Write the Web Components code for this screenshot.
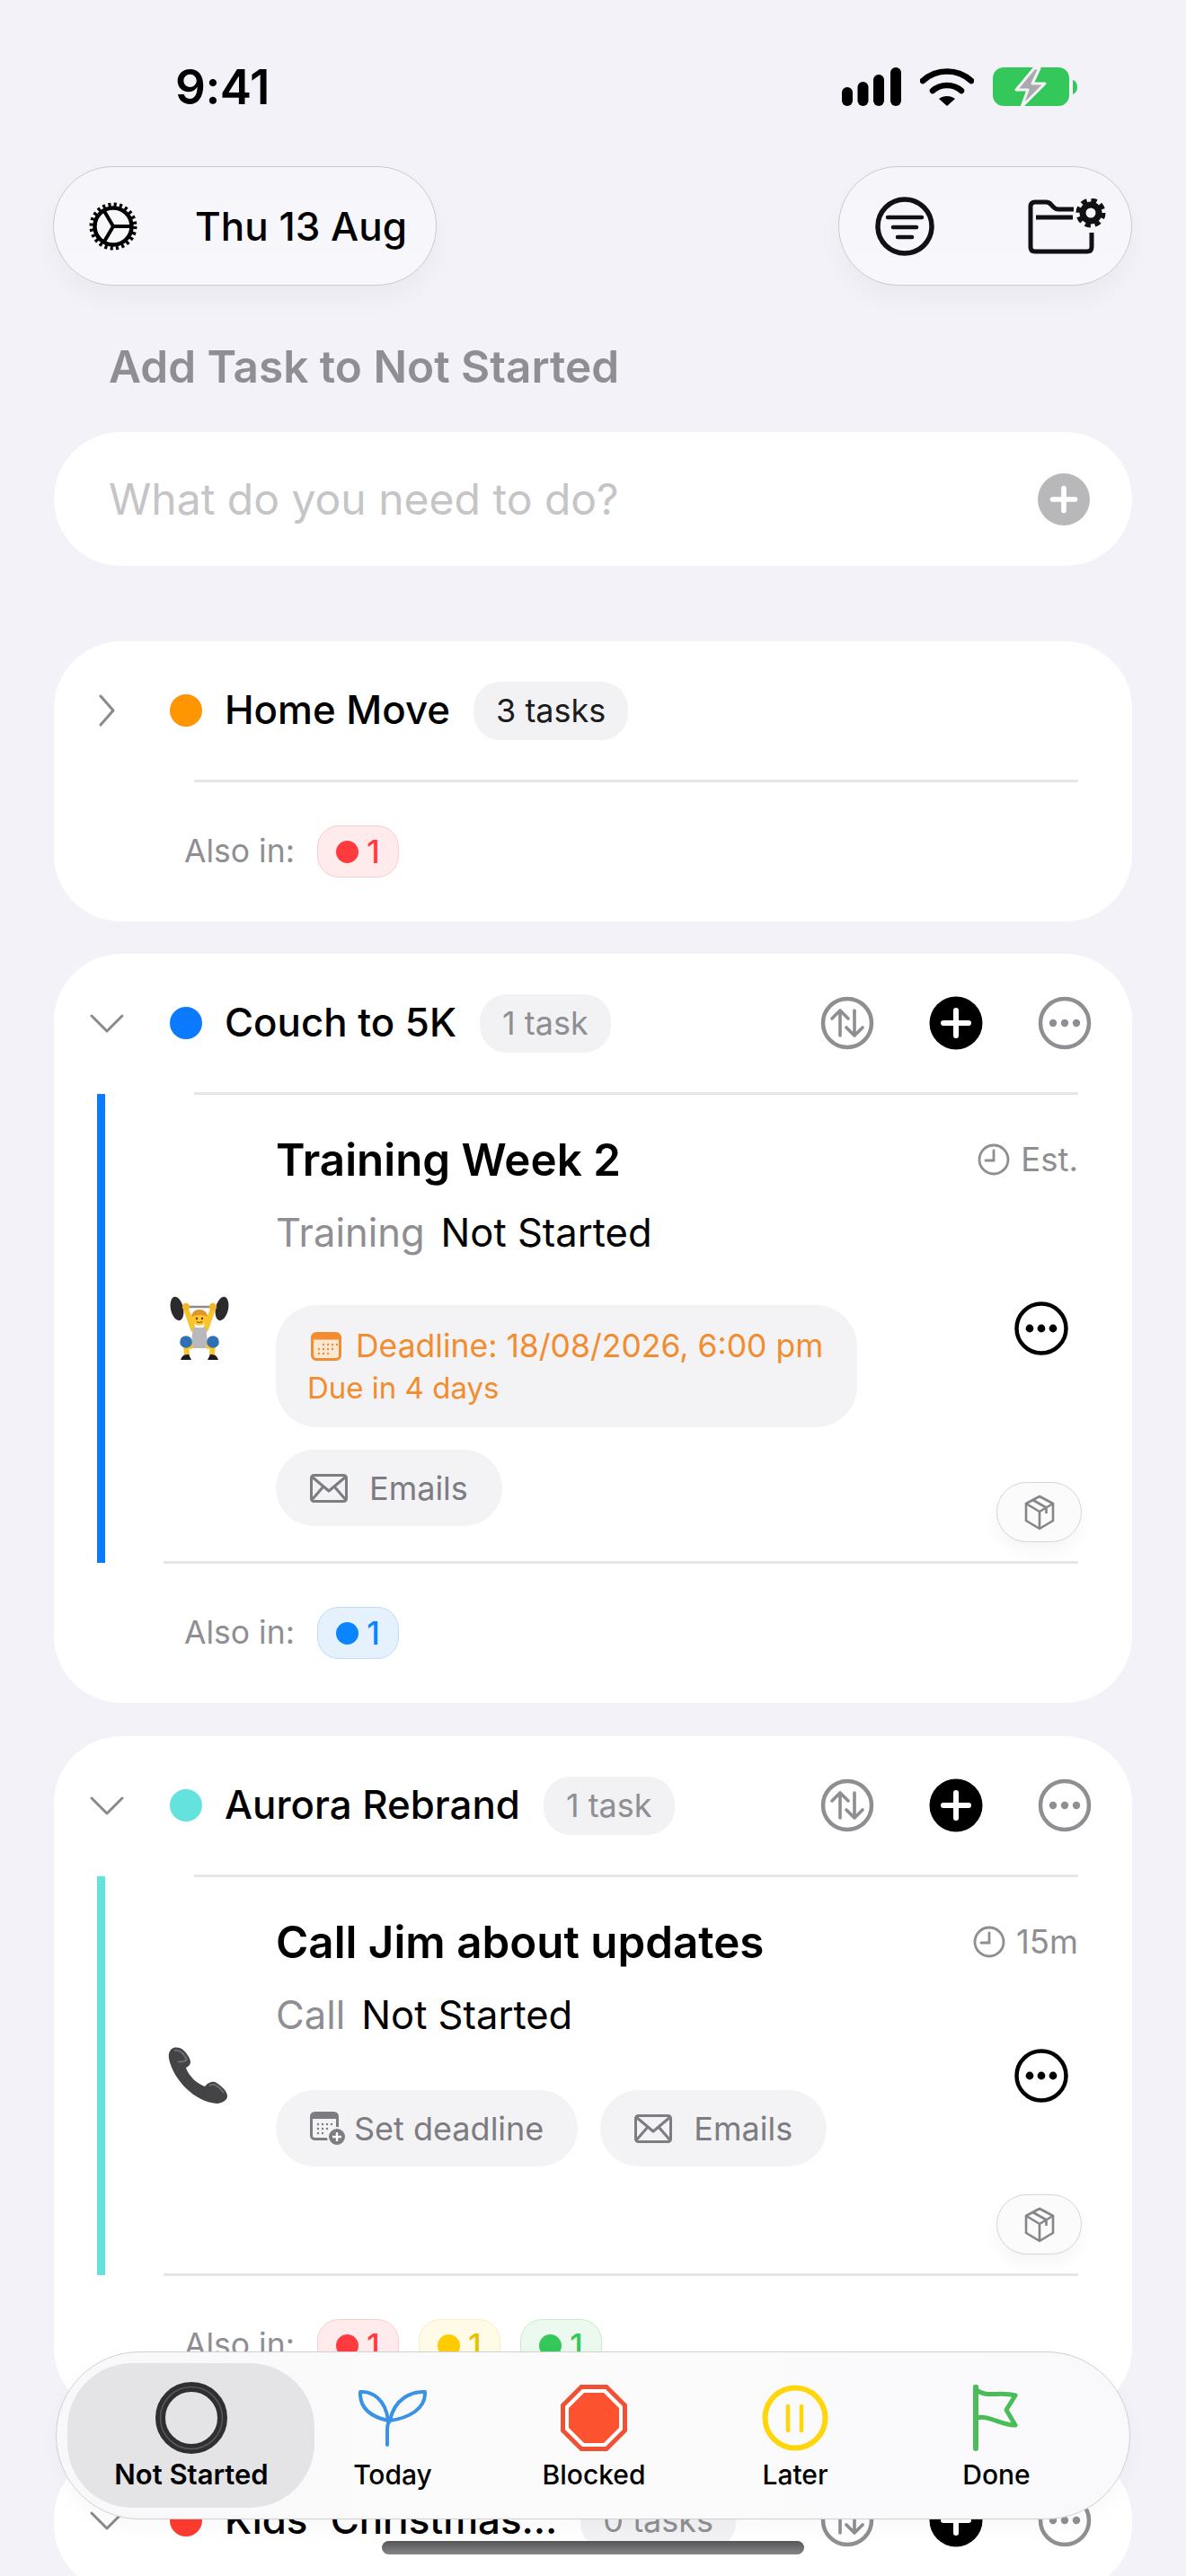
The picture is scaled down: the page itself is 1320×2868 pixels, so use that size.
<!DOCTYPE html>
<html>
<head>
<meta charset="utf-8">
<title>Tasks</title>
<style>
  html, body { margin: 0; height: 2868px; overflow: hidden; }
  body {
    position: relative;
    background: #f2f2f8;
    font-family: Inter, "Noto Sans", "Liberation Sans", sans-serif;
    color: #000;
  }
  main { display: block; padding: 0 60px; }
</style>
</head>
<body>
<main>
  <status-bar></status-bar>
  <top-bar></top-bar>
  <add-task></add-task>

  <project-card color="#ff9500" name="Home Move" count="3 tasks" dark-count collapsed style="margin-bottom:36px">
    <also-in slot="also"><status-chip color="#ff3b40" bg="#ffebec" line="#fbcdcf">1</status-chip></also-in>
  </project-card>

  <project-card color="#0a7aff" name="Couch to 5K" count="1 task" actions>
    <task-row color="#0a7aff" name="Training Week 2" kind="Training" est="Est." emoji="lifter" style="--pad-end:41px">
      <deadline-chip></deadline-chip>
      <task-chip icon="mail">Emails</task-chip>
    </task-row>
    <also-in slot="also"><status-chip color="#0a84ff" bg="#e5f2fe" line="#bcdcf8">1</status-chip></also-in>
  </project-card>

  <project-card color="#64e3de" name="Aurora Rebrand" count="1 task" actions style="margin-bottom:40px">
    <task-row color="#64e3de" name="Call Jim about updates" kind="Call" est="15m" emoji="phone" style="--pad-end:121px;--chips-gap:56px">
      <task-chip icon="calendar-plus">Set deadline</task-chip>
      <task-chip icon="mail">Emails</task-chip>
    </task-row>
    <also-in slot="also">
      <status-chip color="#ff3b40" bg="#ffebec" line="#fbcdcf">1</status-chip>
      <status-chip color="#ffcc00" bg="#fffbe6" line="#f8efc6">1</status-chip>
      <status-chip color="#34c759" bg="#ebf9ee" line="#c9ecd0">1</status-chip>
    </also-in>
  </project-card>

  <project-card color="#ff3b30" name="Kids' Christmas..." count="0 tasks" actions></project-card>
</main>

<tab-bar></tab-bar>
<home-indicator></home-indicator>

<script>
const icons = {
  gear: `<svg width="60" height="60" viewBox="0 0 60 60" fill="none" stroke="#000">
    <circle cx="30" cy="30" r="24" stroke-width="5" stroke-dasharray="3.1 3.18"/>
    <circle cx="30" cy="30" r="20.5" stroke-width="4.5"/>
    <path d="M30 30H50M30 30L20 13M30 30L20 47" stroke-width="4"/>
  </svg>`,
  filter: `<svg width="66" height="66" viewBox="0 0 66 66" fill="none" stroke="#111114" stroke-linecap="round">
    <circle cx="33" cy="33" r="30" stroke-width="5.5"/>
    <path d="M14 23H52M20 34H46M25 45H41" stroke-width="4.5"/>
  </svg>`,
  folderGear: `<svg width="90" height="62" viewBox="0 0 90 62" fill="none" stroke="#111114">
    <path d="M71 38V54Q71 59 66 59H8Q3 59 3 54V9Q3 4 8 4H20Q24 4 26 7L29 10Q31 12 34 12H51" stroke-width="5"/>
    <path d="M9 21H50" stroke-width="5"/>
    <circle cx="70" cy="16" r="9" stroke-width="7"/>
    <circle cx="70" cy="16" r="13.5" stroke-width="6" stroke-dasharray="6 4.6"/>
  </svg>`,
  plus: `<svg width="34" height="34" viewBox="0 0 30 30" stroke="#fff" stroke-width="5" stroke-linecap="round"><path d="M15 4V26M4 15H26"/></svg>`,
  sort: `<svg width="60" height="60" viewBox="0 0 60 60" fill="none" stroke="#8e8e93" stroke-width="4.5" stroke-linecap="round" stroke-linejoin="round">
    <circle cx="30" cy="30" r="27"/>
    <path d="M22 44V16M13 25L22 16L31 25" stroke-width="3.6"/>
    <path d="M38 16V44M29 35L38 44L47 35" stroke-width="3.6"/>
  </svg>`,
  addBlack: `<svg width="60" height="60" viewBox="0 0 60 60"><circle cx="30" cy="30" r="29.500" fill="#000"/><path d="M30 16V44M16 30H44" stroke="#fff" stroke-width="6" stroke-linecap="round"/></svg>`,
  moreGray: `<svg width="60" height="60" viewBox="0 0 60 60" fill="none"><circle cx="30" cy="30" r="27" stroke="#8e8e93" stroke-width="4.5"/><g fill="#8e8e93"><circle cx="17" cy="30" r="4.2"/><circle cx="30" cy="30" r="4.2"/><circle cx="43" cy="30" r="4.2"/></g></svg>`,
  moreBlack: `<svg width="60" height="60" viewBox="0 0 60 60" fill="none"><circle cx="30" cy="30" r="27.5" stroke="#000" stroke-width="4.5"/><g fill="#000"><circle cx="17" cy="30" r="4.4"/><circle cx="30" cy="30" r="4.4"/><circle cx="43" cy="30" r="4.4"/></g></svg>`,
  clock: `<svg width="36" height="36" viewBox="0 0 36 36" fill="none" stroke="#8e8e93" stroke-width="2.8" stroke-linecap="round"><circle cx="18" cy="18" r="16"/><path d="M18 8V19H9"/></svg>`,
  mail: `<svg width="42" height="32" viewBox="0 0 42 32" fill="none" stroke="#7c7c82" stroke-width="3" stroke-linejoin="round"><rect x="1.5" y="1.5" width="39" height="29" rx="3"/><path d="M2 3L21 19L40 3M2 29L15 14M40 29L27 14"/></svg>`,
  calendar: `<svg width="34" height="32" viewBox="0 0 34 32" fill="none"><rect x="1.5" y="1.5" width="31" height="29" rx="4.5" fill="#fbe8d4" stroke="#f28c2f" stroke-width="3"/><path d="M4 1.5H30Q32.500 1.500 32.500 4V8.500H1.500V4Q1.500 1.500 4 1.500Z" fill="#f28c2f"/><g fill="#f28c2f"><circle cx="14" cy="14" r="1.200"/><circle cx="19" cy="14" r="1.200"/><circle cx="24" cy="14" r="1.200"/><circle cx="29" cy="14" r="1.200"/><circle cx="9" cy="19" r="1.200"/><circle cx="14" cy="19" r="1.200"/><circle cx="19" cy="19" r="1.200"/><circle cx="24" cy="19" r="1.200"/><circle cx="9" cy="24" r="1.200"/><circle cx="14" cy="24" r="1.200"/><circle cx="19" cy="24" r="1.200"/></g></svg>`,
  calendarPlus: `<svg width="40" height="38" viewBox="0 0 40 38" fill="none"><rect x="1.500" y="1.500" width="29" height="29" rx="4" stroke="#7c7c82" stroke-width="3"/><path d="M4 1.500H28Q30.500 1.500 30.500 4V8H1.500V4Q1.500 1.500 4 1.500Z" fill="#7c7c82"/><g fill="#7c7c82"><circle cx="9" cy="14" r="1.200"/><circle cx="14" cy="14" r="1.200"/><circle cx="19" cy="14" r="1.200"/><circle cx="24" cy="14" r="1.200"/><circle cx="9" cy="19" r="1.200"/><circle cx="14" cy="19" r="1.200"/><circle cx="19" cy="19" r="1.200"/><circle cx="9" cy="24" r="1.200"/><circle cx="14" cy="24" r="1.200"/></g><circle cx="30" cy="28" r="10" fill="#7c7c82" stroke="#f3f3f5" stroke-width="2"/><path d="M30 23V33M25 28H35" stroke="#fff" stroke-width="2.400"/></svg>`,
  box: `<svg width="34" height="40" viewBox="0 0 34 40" fill="none" stroke="#85858a" stroke-width="2.600" stroke-linejoin="round"><path d="M17 2L32 10V29L17 38L2 29V10Z"/><path d="M2 10L17 19L32 10M17 19V38M9.500 6L24.500 14.500V21"/></svg>`,
  lifter: `<svg width="70" height="72" viewBox="0 0 70 72" fill="none">
    <path d="M10 12H60" stroke="#8a8a8c" stroke-width="2.500"/>
    <ellipse cx="10" cy="14" rx="7" ry="13.500" transform="rotate(-12 10 14)" fill="#2b2b2e"/>
    <ellipse cx="60" cy="14" rx="7" ry="13.500" transform="rotate(12 60 14)" fill="#2b2b2e"/>
    <path d="M20 14L28 37M50 14L42 37" stroke="#f8c42c" stroke-width="6" stroke-linecap="round"/>
    <circle cx="20" cy="12" r="4.200" fill="#f2b52a"/><circle cx="50" cy="12" r="4.200" fill="#f2b52a"/>
    <path d="M28 35H42L44 50L46 58H24L26 50Z" fill="#b9b9bd"/>
    <path d="M25 56L20 52L21 65M45 56L50 52L49 65" stroke="#f8c42c" stroke-width="6" stroke-linecap="round" stroke-linejoin="round"/>
    <circle cx="20" cy="51" r="6.800" fill="#2f6fb3"/><circle cx="50" cy="51" r="6.800" fill="#2f6fb3"/>
    <path d="M14 71Q16 64 23 65L26 71ZM56 71Q54 64 47 65L44 71Z" fill="#1c1c1e"/>
    <circle cx="35" cy="24" r="8.800" fill="#fcc52e"/>
    <path d="M26 23Q27 15 35 15Q43 15 44 23Q38 19 26 23Z" fill="#e0962a"/>
    <circle cx="32" cy="25" r="1.200" fill="#5a3a10"/><circle cx="38" cy="25" r="1.200" fill="#5a3a10"/>
    <path d="M32 28.500Q35 30.500 38 28.500" stroke="#8a4b18" stroke-width="1.100"/>
  </svg>`,
  phone: `<svg width="68" height="66" viewBox="0 0 68 66"><path d="M6 2C14 0 20 6 24 14C26 18 25 22 20 24C22 32 32 42 41 45C44 41 50 38 54 41C60 45 66 50 66 56C66 60 60 64 54 64C30 62 6 38 1 14C0 8 2 4 6 2Z" fill="#444447"/><path d="M7 5C13 4 18 9 21 15C18 18 13 18 11 17M46 44C50 41 56 44 62 52" fill="none" stroke="#6f6f73" stroke-width="2"/></svg>`,
  ring: `<svg width="80" height="80" viewBox="0 0 80 80" fill="none"><circle cx="40" cy="40" r="34.500" stroke="#2f2f31" stroke-width="11"/><circle cx="40" cy="40" r="34.500" stroke="#58585a" stroke-width="1.500"/></svg>`,
  sprout: `<svg width="76" height="64" viewBox="0 0 76 64" fill="none" stroke="#3a92e4" stroke-width="4" stroke-linecap="round" stroke-linejoin="round"><path d="M2 3C14 2 30 10 33 35C15 31 1 22 2 3Z"/><path d="M74 3C60 2 40 10 35 35C56 32 75 22 74 3Z"/><path d="M32 62V45C32 40 33 37 35 35"/></svg>`,
  stop: `<svg width="74" height="74" viewBox="0 0 74 74"><polygon points="22,0 52,0 74,22 74,52 52,74 22,74 0,52 0,22" fill="#ee5136"/><polygon points="24,5 50,5 69,24 69,50 50,69 24,69 5,50 5,24" fill="#fff"/><polygon points="26,9 48,9 65,26 65,48 48,65 26,65 9,48 9,26" fill="#fd5230"/></svg>`,
  pause: `<svg width="74" height="74" viewBox="0 0 74 74" fill="none" stroke="#ffd60a"><circle cx="37" cy="37" r="33.500" stroke-width="6"/><path d="M29 24V51M44 24V51" stroke-width="4.500" stroke-linecap="round"/></svg>`,
  flag: `<svg width="54" height="74" viewBox="0 0 54 74" fill="none" stroke="#4cbb5a" stroke-linecap="round" stroke-linejoin="round"><path d="M4 2.500V71" stroke-width="6"/><path d="M5 6C16 15 30 7 48 12L38 28L48 45C33 46 18 33 5 37" stroke-width="5"/></svg>`
};

class StatusBar extends HTMLElement {
  connectedCallback() {
    this.attachShadow({ mode: 'open' });
    this.shadowRoot.innerHTML = `
      <style>
        :host { display: flex; align-items: center; justify-content: space-between; height: 176px; padding: 9px 61px 0 135px; }
        .time { font: 600 53px/60px Inter, sans-serif; letter-spacing: -0.5px; }
        .icons { display: flex; align-items: center; gap: 21px; }
      </style>
      <span class="time">9:41</span>
      <span class="icons">
        <svg width="66" height="44" viewBox="0 0 66 44" fill="#000"><rect x="0" y="22" width="12" height="21" rx="6"/><rect x="17.500" y="16" width="12" height="27" rx="6"/><rect x="35" y="8" width="12" height="35" rx="6"/><rect x="54" y="0" width="12" height="43" rx="6"/></svg>
        <svg width="60" height="44" viewBox="0 0 60 44" fill="none" stroke="#000" stroke-width="6.500" stroke-linecap="round"><path d="M3 15C18 1 42 1 57 15"/><path d="M14 26C23 18 37 18 46 26"/><path d="M30 43L21 35C26 31 34 31 39 35Z" fill="#000" stroke="none"/></svg>
        <svg width="94" height="46" viewBox="0 0 94 46"><rect x="0" y="1" width="85" height="43" rx="12" fill="#34c759"/><path d="M89 15Q94 17 94 23Q94 29 89 31Z" fill="#34c759"/><path d="M46 2L26 26H39L32 45L58 19H44L52 2Z" fill="#a9a9ae" stroke="#f2f2f8" stroke-width="3" stroke-linejoin="round"/></svg>
      </span>`;
  }
}

class TopBar extends HTMLElement {
  connectedCallback() {
    this.attachShadow({ mode: 'open' });
    this.shadowRoot.innerHTML = `
      <style>
        :host { display: flex; justify-content: space-between; margin-left: -1px; }
        .pill {
          display: flex; align-items: center; height: 133px; box-sizing: border-box;
          border-radius: 67px; border: 1.5px solid #c9c9ce;
          background: linear-gradient(#f5f5fa, #f8f8fc);
          box-shadow: 0 16px 30px rgba(0, 0, 0, 0.035);
        }
        .date { width: 427px; padding-left: 36px; gap: 61px; }
        .date span { font: 500 44px/50px Inter, sans-serif; white-space: nowrap; }
        .tools { width: 327px; padding-left: 40px; gap: 104px; }
      </style>
      <div class="pill date">${icons.gear}<span>Thu 13 Aug</span></div>
      <div class="pill tools">${icons.filter}${icons.folderGear}</div>`;
  }
}

class AddTask extends HTMLElement {
  connectedCallback() {
    this.attachShadow({ mode: 'open' });
    this.shadowRoot.innerHTML = `
      <style>
        :host { display: block; margin-bottom: 84px; }
        h2 { margin: 60px 0 43px 61px; font: 600 49.500px/60px Inter, sans-serif; color: #8e8e93; }
        .field {
          display: flex; align-items: center; justify-content: space-between;
          height: 149px; box-sizing: border-box; padding: 0 47px 0 61px;
          border-radius: 75px; background: #fff;
        }
        .field span { font: 400 48px/56px Inter, sans-serif; color: #c5c5c8; }
        .add { display: grid; place-items: center; width: 58px; height: 58px; border-radius: 50%; background: #b8b8ba; }
      </style>
      <h2>Add Task to Not Started</h2>
      <div class="field"><span>What do you need to do?</span><div class="add">${icons.plus}</div></div>`;
  }
}

class ProjectCard extends HTMLElement {
  connectedCallback() {
    const closed = this.hasAttribute('collapsed');
    const chevron = closed
      ? `<svg width="20" height="36" viewBox="0 0 20 36" fill="none" stroke="#8a8a8e" stroke-width="3" stroke-linecap="round" stroke-linejoin="round"><path d="M3 2L17 18L3 34"/></svg>`
      : `<svg width="38" height="22" viewBox="0 0 38 22" fill="none" stroke="#8a8a8e" stroke-width="3" stroke-linecap="round" stroke-linejoin="round"><path d="M2 3L19 20L36 3"/></svg>`;
    const actions = this.hasAttribute('actions')
      ? `<div class="actions">${icons.sort}${icons.addBlack}${icons.moreGray}</div>` : '';
    const hasAlso = this.querySelector('[slot="also"]');
    const hasTask = this.querySelector('task-row');
    this.attachShadow({ mode: 'open' });
    this.shadowRoot.innerHTML = `
      <style>
        :host { display: block; margin-bottom: 37px; background: #fff; border-radius: 75px; }
        header { display: flex; align-items: center; height: 154px; padding-right: 45px; }
        .chev { display: flex; justify-content: center; width: 118px; margin-right: 11px; }
        .dot { width: 36px; height: 36px; border-radius: 50%; flex: none; }
        .name { margin: 0 26px 0 25px; font: 500 43.800px/56px Inter, sans-serif; white-space: nowrap; }
        .count { padding: 0 25px; border-radius: 30px; background: #f2f2f4; font: 400 36px/65px Inter, sans-serif; color: #8e8e93; white-space: nowrap; }
        .count.dark { color: #1c1c1e; }
        .actions { display: flex; gap: 61px; margin-left: auto; }
        .rule { height: 3px; margin: 0 60px 0 156px; background: #e6e6e8; }
        .rule.end { margin: -2px 60px 0 122px; position: relative; }
        .foot { padding: 48px 0 49px 145px; }
      </style>
      <header>
        <span class="chev">${chevron}</span>
        <span class="dot" style="background:${this.getAttribute('color')}"></span>
        <span class="name">${this.getAttribute('name')}</span>
        <span class="count ${this.hasAttribute('dark-count') ? 'dark' : ''}">${this.getAttribute('count')}</span>
        ${actions}
      </header>
      <div class="rule"></div>
      <slot></slot>
      ${hasTask ? '<div class="rule end"></div>' : ''}
      ${hasAlso ? '<div class="foot"><slot name="also"></slot></div>' : ''}`;
  }
}

class TaskRow extends HTMLElement {
  connectedCallback() {
    this.attachShadow({ mode: 'open' });
    this.shadowRoot.innerHTML = `
      <style>
        :host { display: grid; grid-template-columns: 9px 190px 1fr; margin: -1px 60px 0 48px; }
        .bar { grid-area: 1 / 1; background: var(--bar); }
        .emoji { grid-area: 1 / 2; align-self: center; padding-left: 70px; display: flex; }
        .body { grid-area: 1 / 3; padding: 42px 0 var(--pad-end, 40px); }
        .top { display: flex; align-items: center; justify-content: space-between; height: 62px; }
        h3 { margin: 0; font: 600 49.300px/62px Inter, sans-serif; white-space: nowrap; }
        .est { display: flex; align-items: center; gap: 12px; font: 400 36.500px/44px Inter, sans-serif; color: #8e8e93; }
        .sub { margin-top: 22px; font: 400 43.500px/56px Inter, sans-serif; display: flex; gap: 18px; }
        .sub span:first-child { color: #8e8e93; }
        .chips { display: flex; flex-wrap: wrap; gap: 25px; margin-top: var(--chips-gap, 53px); }
        .more { grid-area: 1 / 3; align-self: center; justify-self: end; margin-right: 11px; display: flex; }
        .box {
          grid-area: 1 / 3; align-self: end; justify-self: end;
          display: grid; place-items: center; box-sizing: border-box;
          width: 95px; height: 67px; margin: 0 -4px 23px 0; border-radius: 34px;
          border: 1.500px solid #d6d6da; background: #fbfbfc;
          box-shadow: 0 10px 18px rgba(0, 0, 0, 0.04);
        }
      </style>
      <div class="bar" style="--bar:${this.getAttribute('color')}"></div>
      <div class="emoji">${icons[this.getAttribute('emoji')]}</div>
      <div class="body">
        <div class="top">
          <h3>${this.getAttribute('name')}</h3>
          <span class="est">${icons.clock}${this.getAttribute('est')}</span>
        </div>
        <div class="sub"><span>${this.getAttribute('kind')}</span><span>Not Started</span></div>
        <div class="chips"><slot></slot></div>
      </div>
      <div class="more">${icons.moreBlack}</div>
      <div class="box">${icons.box}</div>`;
  }
}

class DeadlineChip extends HTMLElement {
  connectedCallback() {
    this.attachShadow({ mode: 'open' });
    this.shadowRoot.innerHTML = `
      <style>
        :host { display: block; width: 647px; height: 136px; box-sizing: border-box; padding: 24px 0 0 35px; border-radius: 46px; background: #f3f3f5; color: #f28c2f; font-family: Inter, sans-serif; }
        .a { display: flex; align-items: center; gap: 16px; font-size: 35.500px; line-height: 44px; white-space: nowrap; margin-left: 4px; }
        .b { font-size: 33px; line-height: 40px; margin-top: 4px; }
      </style>
      <div class="a">${icons.calendar}<span>Deadline: 18/08/2026, 6:00 pm</span></div>
      <div class="b">Due in 4 days</div>`;
  }
}

class TaskChip extends HTMLElement {
  connectedCallback() {
    const deadline = this.getAttribute('icon') === 'calendar-plus';
    this.attachShadow({ mode: 'open' });
    this.shadowRoot.innerHTML = `
      <style>
        :host { display: flex; align-items: center; height: 85px; box-sizing: border-box; padding: 0 38px; border-radius: 43px; background: #f3f3f5; color: #7c7c82; font: 400 36px/44px Inter, sans-serif; white-space: nowrap; gap: ${deadline ? 9 : 24}px; }
      </style>
      ${deadline ? icons.calendarPlus : icons.mail}<slot></slot>`;
  }
}

class AlsoIn extends HTMLElement {
  connectedCallback() {
    this.attachShadow({ mode: 'open' });
    this.shadowRoot.innerHTML = `
      <style>
        :host { display: flex; align-items: center; font: 400 35.500px/58px Inter, sans-serif; color: #8e8e93; }
        span { margin-right: 25px; }
        div { display: flex; gap: 22px; }
      </style>
      <span>Also in:</span><div><slot></slot></div>`;
  }
}

class StatusChip extends HTMLElement {
  connectedCallback() {
    const color = this.getAttribute('color');
    const text = color === '#ffcc00' ? '#e8c000' : color;
    this.attachShadow({ mode: 'open' });
    this.shadowRoot.innerHTML = `
      <style>
        :host { display: flex; align-items: center; justify-content: center; gap: 9px; box-sizing: border-box; width: 91px; height: 58px; border-radius: 24px; background: ${this.getAttribute('bg')}; border: 1.500px solid ${this.getAttribute('line')}; color: ${text}; font: 500 35px/40px Inter, sans-serif; }
        i { width: 25px; height: 25px; border-radius: 50%; background: ${color}; }
      </style>
      <i></i><slot></slot>`;
  }
}

class TabBar extends HTMLElement {
  connectedCallback() {
    const items = [['ring', 'Not Started'], ['sprout', 'Today'], ['stop', 'Blocked'], ['pause', 'Later'], ['flag', 'Done']];
    this.attachShadow({ mode: 'open' });
    this.shadowRoot.innerHTML = `
      <style>
        :host {
          position: absolute; left: 62px; top: 2618px; z-index: 5;
          display: flex; width: 1196px; height: 187px; box-sizing: border-box;
          padding: 12px 0 0 38px; border-radius: 94px;
          border: 1.500px solid #d0d0d4;
          background: linear-gradient(90deg, #f8f8fa, #fbfbfc 40%, #f9f9fb);
          box-shadow: 0 8px 24px rgba(0, 0, 0, 0.03);
          font-family: Inter, sans-serif;
        }
        .item { position: relative; display: flex; flex-direction: column; align-items: center; width: 224px; height: 161px; box-sizing: border-box; padding-top: 21px; }
        .item.on::before { content: ''; position: absolute; z-index: 0; top: 0; bottom: 0; left: -26px; right: -25px; border-radius: 72px; background: #e4e4e7; }
        .icon { position: relative; display: grid; place-items: center; height: 80px; }
        .label { position: relative; margin-top: 4px; font: 500 30px/38px Inter, sans-serif; white-space: nowrap; }
        .on .label { font-weight: 600; font-size: 31px; }
      </style>
      ${items.map(([icon, label], i) => `
        <div class="item ${i === 0 ? 'on' : ''}"><div class="icon">${icons[icon]}</div><div class="label">${label}</div></div>`).join('')}`;
  }
}

class HomeIndicator extends HTMLElement {
  connectedCallback() {
    this.attachShadow({ mode: 'open' });
    this.shadowRoot.innerHTML = `
      <style>
        :host { position: absolute; left: 425px; top: 2829px; z-index: 6; width: 470px; height: 15px; border-radius: 8px; background: linear-gradient(#555558, #868689); }
      </style>`;
  }
}

customElements.define('status-bar', StatusBar);
customElements.define('top-bar', TopBar);
customElements.define('add-task', AddTask);
customElements.define('project-card', ProjectCard);
customElements.define('task-row', TaskRow);
customElements.define('deadline-chip', DeadlineChip);
customElements.define('task-chip', TaskChip);
customElements.define('also-in', AlsoIn);
customElements.define('status-chip', StatusChip);
customElements.define('tab-bar', TabBar);
customElements.define('home-indicator', HomeIndicator);
</script>
</body>
</html>
